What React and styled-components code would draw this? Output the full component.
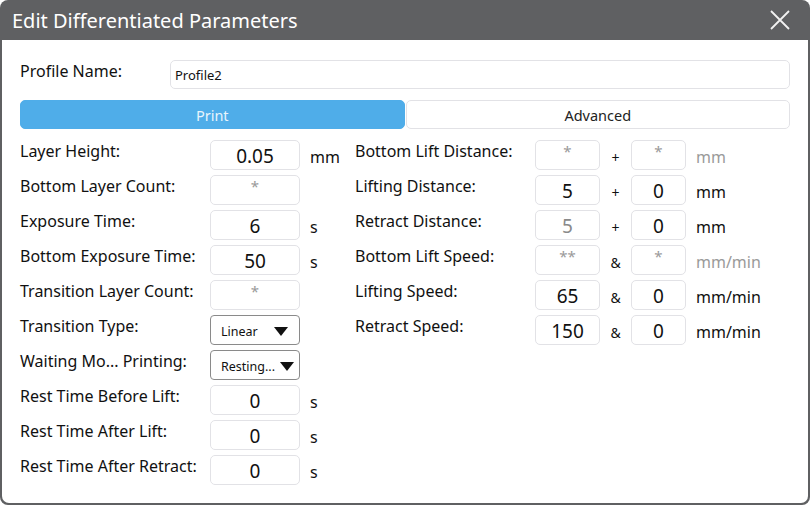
import React from "react";
import styled, { createGlobalStyle } from "styled-components";

const Global = createGlobalStyle`
  html, body { margin: 0; padding: 0; background: #ffffff; }
  body { font-family: "Noto Sans", "Open Sans", sans-serif; }
  * { box-sizing: border-box; }
`;

const Window = styled.div`
  width: 810px;
  height: 505px;
  display: flex;
  flex-direction: column;
  border-radius: 8px;
  overflow: hidden;
  background: #5f6062;
`;

const TitleBar = styled.div`
  height: 40px;
  flex: none;
  display: flex;
  align-items: center;
  justify-content: space-between;
  padding: 0 20px 0 12px;
  color: #ffffff;
  font-size: 20px;
`;

const CloseBtn = styled.div`
  width: 20px;
  height: 20px;
  display: flex;
`;

const Body = styled.div`
  flex: 1;
  margin: 0 2px 2px 2px;
  background: #ffffff;
  border-radius: 0 0 7px 7px;
  padding: 20px 18px 0 18px;
  display: flex;
  flex-direction: column;
  color: #111;
`;

const ProfileRow = styled.div`
  display: flex;
  align-items: flex-start;
  height: 29px;
`;

const ProfileLabel = styled.div`
  width: 150px;
  font-size: 16px;
  line-height: 22px;
`;

const ProfileInput = styled.div`
  flex: 1;
  height: 29px;
  border: 1px solid #e2e2e6;
  border-radius: 5px;
  font-size: 13px;
  display: flex;
  align-items: center;
  padding-left: 4px;
`;

const Tabs = styled.div`
  display: flex;
  gap: 1px;
  margin-top: 11px;
  height: 29px;
`;

const Tab = styled.div`
  flex: 1;
  display: flex;
  align-items: center;
  justify-content: center;
  font-size: 14.5px;
  border-radius: 5px;
  background: ${(p) => (p.$active ? "#4fade9" : "#ffffff")};
  color: ${(p) => (p.$active ? "#e8f4fc" : "#222")};
  border: 1px solid ${(p) => (p.$active ? "#4fade9" : "#e2e2e6")};
`;

const Columns = styled.div`
  display: flex;
  margin-top: 11px;
`;

const Column = styled.div`
  display: flex;
  flex-direction: column;
  gap: 5px;
  width: ${(p) => p.$w}px;
`;

const Row = styled.div`
  display: flex;
  align-items: center;
  height: 30px;
`;

const Label = styled.div`
  width: ${(p) => p.$w}px;
  font-size: 16px;
  white-space: nowrap;
  align-self: flex-start;
  line-height: 22px;
`;

const Box = styled.div`
  width: ${(p) => p.$w}px;
  height: 30px;
  border: 1px solid #e2e2e6;
  border-radius: 5px;
  display: flex;
  align-items: center;
  justify-content: center;
  font-size: ${(p) => (p.$ph ? "15px" : "19px")};
  color: ${(p) => (p.$ph ? "#9a9a9a" : "#111")};
  padding-top: ${(p) => (p.$ph ? "0" : "2px")};
`;

const MutedNum = styled(Box)`
  color: #8a8a8a;
  font-size: 19px;
  padding-top: 2px;
`;

const Star = styled.span`
  font-size: 15px;
  margin-top: -8px;
`;

const Sep = styled.div`
  width: 31px;
  text-align: center;
  font-size: 14px;
  padding-top: 4px;
`;

const Unit = styled.div`
  margin-left: ${(p) => p.$ml}px;
  font-size: 16px;
  padding-top: 4px;
  color: ${(p) => (p.$muted ? "#9a9a9a" : "#111")};
`;

const Select = styled.div`
  width: 90px;
  height: 30px;
  border: 1px solid #8a8a8a;
  border-radius: 4px;
  display: flex;
  align-items: center;
  justify-content: space-between;
  padding: 2px 8px 0 10px;
  font-size: 12.5px;
`;

const Caret = styled.div`
  width: 0;
  height: 0;
  border-left: 7px solid transparent;
  border-right: 7px solid transparent;
  border-top: 9px solid #111;
  margin-right: ${(p) => p.$mr}px;
`;

const Value = ({ v, w = 90 }) =>
  v.startsWith("*") ? (
    <Box $w={w} $ph>
      <Star>{v}</Star>
    </Box>
  ) : (
    <Box $w={w}>{v}</Box>
  );

const leftRows = [
  { label: "Layer Height:", v: "0.05", unit: "mm" },
  { label: "Bottom Layer Count:", v: "*" },
  { label: "Exposure Time:", v: "6", unit: "s" },
  { label: "Bottom Exposure Time:", v: "50", unit: "s" },
  { label: "Transition Layer Count:", v: "*" },
  { label: "Transition Type:", select: "Linear", mr: 3 },
  { label: "Waiting Mo... Printing:", select: "Resting...", mr: -3 },
  { label: "Rest Time Before Lift:", v: "0", unit: "s" },
  { label: "Rest Time After Lift:", v: "0", unit: "s" },
  { label: "Rest Time After Retract:", v: "0", unit: "s" },
];

const rightRows = [
  { label: "Bottom Lift Distance:", a: "*", sep: "+", b: "*", unit: "mm", muted: true },
  { label: "Lifting Distance:", a: "5", sep: "+", b: "0", unit: "mm" },
  { label: "Retract Distance:", a: "5", aMuted: true, sep: "+", b: "0", unit: "mm" },
  { label: "Bottom Lift Speed:", a: "**", sep: "&", b: "*", unit: "mm/min", muted: true },
  { label: "Lifting Speed:", a: "65", sep: "&", b: "0", unit: "mm/min" },
  { label: "Retract Speed:", a: "150", sep: "&", b: "0", unit: "mm/min" },
];

export default function App() {
  return (
    <>
      <Global />
      <Window>
        <TitleBar>
          <span>Edit Differentiated Parameters</span>
          <CloseBtn>
            <svg width="20" height="20" viewBox="0 0 20 20">
              <path d="M1 1 L19 19 M19 1 L1 19" stroke="#f2f2f2" strokeWidth="1.8" />
            </svg>
          </CloseBtn>
        </TitleBar>
        <Body>
          <ProfileRow>
            <ProfileLabel>Profile Name:</ProfileLabel>
            <ProfileInput>Profile2</ProfileInput>
          </ProfileRow>
          <Tabs>
            <Tab $active>Print</Tab>
            <Tab>Advanced</Tab>
          </Tabs>
          <Columns>
            <Column $w={335}>
              {leftRows.map((r) => (
                <Row key={r.label}>
                  <Label $w={190}>{r.label}</Label>
                  {r.select ? (
                    <Select>
                      <span>{r.select}</span>
                      <Caret $mr={r.mr} />
                    </Select>
                  ) : (
                    <Value v={r.v} />
                  )}
                  {r.unit && <Unit $ml={10}>{r.unit}</Unit>}
                </Row>
              ))}
            </Column>
            <Column $w={430}>
              {rightRows.map((r) => (
                <Row key={r.label}>
                  <Label $w={180}>{r.label}</Label>
                  {r.aMuted ? <MutedNum $w={65}>{r.a}</MutedNum> : <Value v={r.a} w={65} />}
                  <Sep>{r.sep}</Sep>
                  <Value v={r.b} w={55} />
                  <Unit $ml={10} $muted={r.muted}>
                    {r.unit}
                  </Unit>
                </Row>
              ))}
            </Column>
          </Columns>
        </Body>
      </Window>
    </>
  );
}
